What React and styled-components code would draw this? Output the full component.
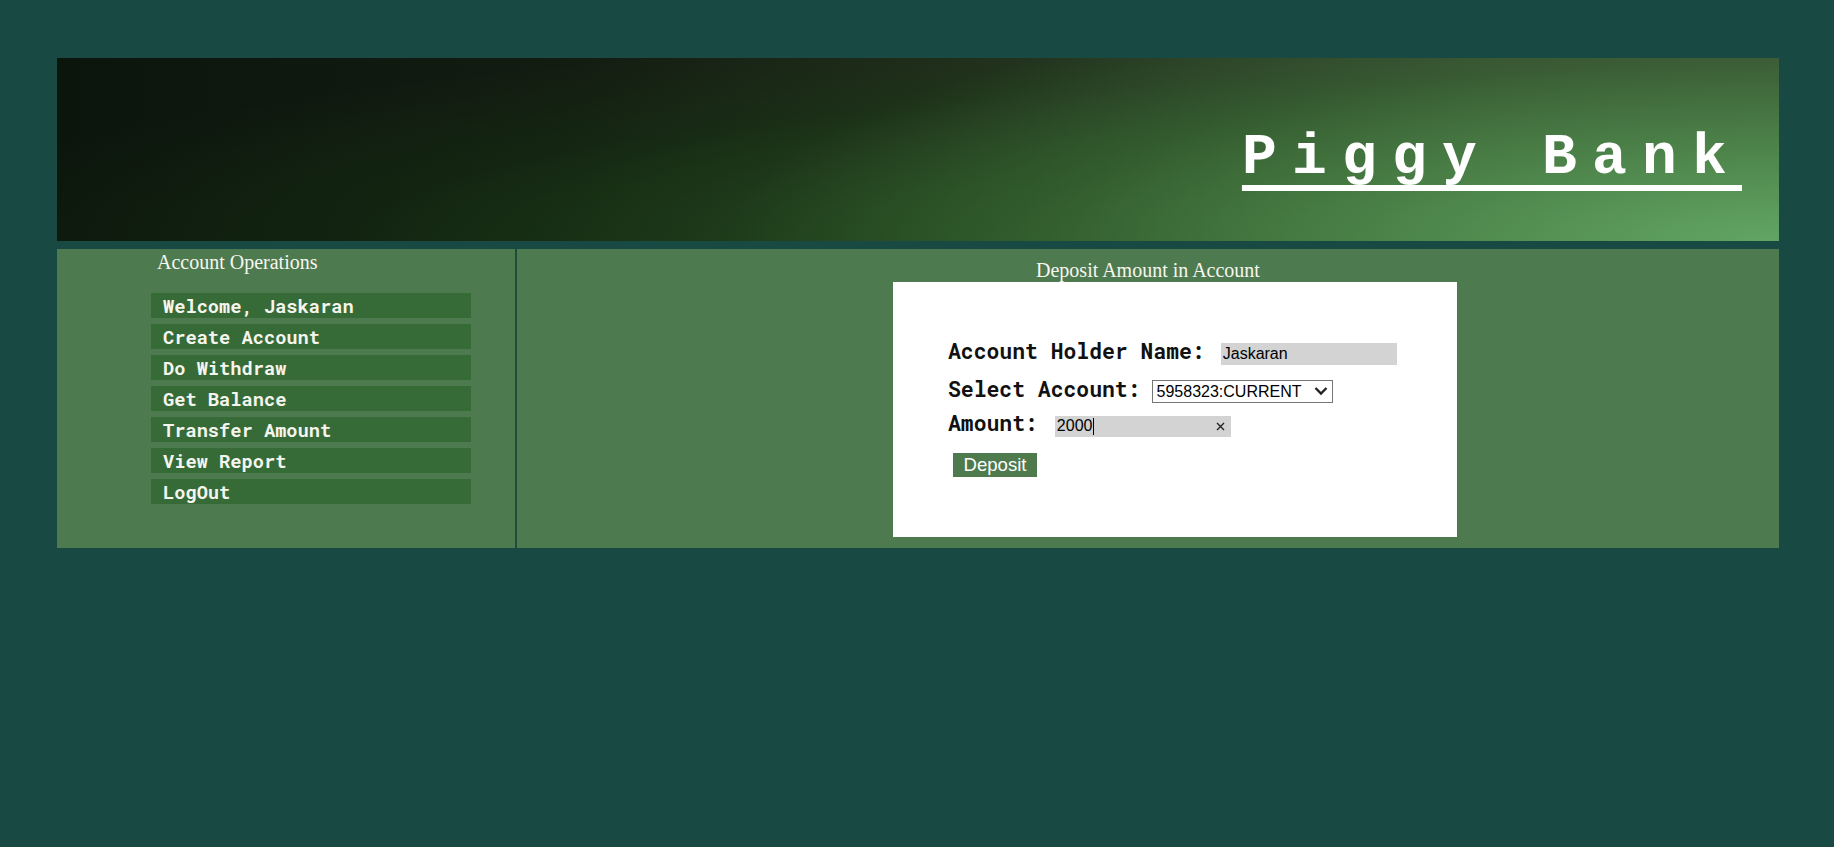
import React from "react";
import styled, { createGlobalStyle } from "styled-components";

const GlobalStyle = createGlobalStyle`
  html, body {
    margin: 0;
    padding: 0;
    background: #184a43;
  }
  body {
    font-family: "Liberation Serif", "Times New Roman", serif;
  }
  * { box-sizing: border-box; }
`;

const Page = styled.div`
  margin: 58px 55px 0 57px;
  display: flex;
  flex-direction: column;
  gap: 8px;
`;

const Header = styled.header`
  height: 183px;
  display: flex;
  justify-content: flex-end;
  align-items: flex-start;
  padding: 67.5px 37px 0 0;
  background:
    radial-gradient(ellipse 1050px 260px at 100% 100%,
      rgba(100, 168, 102, 0.95) 0%,
      rgba(88, 148, 86, 0.72) 35%,
      rgba(70, 120, 66, 0.38) 70%,
      rgba(60, 100, 55, 0) 100%),
    radial-gradient(ellipse 1900px 230px at 100% 100%,
      rgba(50, 115, 45, 0.75) 0%,
      rgba(40, 100, 35, 0.55) 40%,
      rgba(25, 70, 22, 0.25) 75%,
      rgba(15, 50, 15, 0) 100%),
    linear-gradient(to right, #0c150c 0%, #131c11 30%, #1f2a1a 50%, #2b3a26 66%, #3a4a33 84%, #3e4e38 100%);
`;

const Brand = styled.h1`
  margin: 0;
  font-family: "Liberation Mono", "Courier New", monospace;
  font-weight: 700;
  font-size: 58px;
  line-height: 64px;
  letter-spacing: 15.2px;
  color: #ffffff;
  text-decoration: underline;
  text-decoration-thickness: 6px;
  text-underline-offset: 12px;
  text-decoration-skip-ink: none;
  white-space: pre;
`;

const Body = styled.div`
  display: grid;
  grid-template-columns: 460px 1fr;
  background: #4e7a50;
`;

const Sidebar = styled.nav`
  border-right: 2px solid #1e4d3d;
  padding: 2px 0 0 94px;
`;

const PanelTitle = styled.div`
  font-family: "Liberation Serif", "Times New Roman", serif;
  font-size: 20px;
  line-height: 23px;
  color: #f7f7ef;
  padding-left: ${(p) => p.$indent || 0}px;
  text-align: ${(p) => (p.$center ? "center" : "left")};
`;

const Menu = styled.ul`
  list-style: none;
  margin: 19px 0 0 0;
  padding: 0;
  width: 320px;
  display: flex;
  flex-direction: column;
  gap: 6.5px;
`;

const MenuItem = styled.li`
  height: 24.5px;
  background: #366b38;
  padding: 1px 0 0 12px;
  font-family: "Roboto Mono", "DejaVu Sans Mono", monospace;
  font-weight: 700;
  font-size: 18.7px;
  line-height: 23.5px;
  color: #f5f5ee;
  white-space: pre;
  cursor: pointer;
`;

const Main = styled.main`
  padding: 10px 0 11px 0;
  display: flex;
  flex-direction: column;
`;

const FormCard = styled.form`
  margin-left: 376px;
  width: 564px;
  height: 255px;
  background: #ffffff;
  padding: 55px 0 0 55px;
`;

const Row = styled.div`
  display: flex;
  align-items: baseline;
  margin-top: ${(p) => p.$top || 0}px;
`;

const Label = styled.label`
  font-family: "Roboto Mono", "DejaVu Sans Mono", monospace;
  font-weight: 700;
  font-size: 21.4px;
  line-height: 28.2px;
  color: #111111;
  white-space: pre;
`;

const TextInput = styled.input`
  margin: 0 0 0 ${(p) => p.$gap}px;
  width: 176px;
  height: 22px;
  border: none;
  outline: none;
  background: #d3d3d3;
  padding: 0 2px;
  font-family: "Liberation Sans", Arial, sans-serif;
  font-size: 16px;
  color: #000;
`;

const SelectWrap = styled.span`
  position: relative;
  display: inline-block;
  margin-left: ${(p) => p.$gap}px;
`;

const Select = styled.select`
  appearance: none;
  -webkit-appearance: none;
  width: 181px;
  height: 23px;
  border: 1px solid #767676;
  border-radius: 0;
  background: #ffffff;
  padding: 0 0 0 4px;
  font-family: "Liberation Sans", Arial, sans-serif;
  font-size: 16px;
  color: #000;
`;

const Chevron = styled.svg`
  position: absolute;
  right: 5px;
  top: 6px;
  pointer-events: none;
`;

const SearchField = styled.div`
  margin-left: ${(p) => p.$gap}px;
  width: 176px;
  height: 20.4px;
  background: #d3d3d3;
  display: flex;
  align-items: center;
  padding: 0 6px 0 2px;
  font-family: "Liberation Sans", Arial, sans-serif;
  font-size: 16px;
  color: #000;
`;

const FieldValue = styled.span`
  line-height: 18px;
`;

const Caret = styled.span`
  display: inline-block;
  width: 1px;
  height: 17px;
  background: #000;
  margin-left: 1px;
`;

const ClearIcon = styled.svg`
  margin-left: auto;
`;

const SubmitButton = styled.button`
  margin: 15.5px 0 0 5px;
  width: 84px;
  height: 24px;
  border: none;
  border-radius: 0;
  background: #4e7a4e;
  color: #ffffff;
  font-family: "Liberation Sans", Arial, sans-serif;
  font-size: 18.6px;
  padding: 0;
  display: block;
`;

const menu = [
  "Welcome, Jaskaran",
  "Create Account",
  "Do Withdraw",
  "Get Balance",
  "Transfer Amount",
  "View Report",
  "LogOut",
];

export default function App() {
  return (
    <>
      <GlobalStyle />
      <Page>
        <Header>
          <Brand>Piggy Bank</Brand>
        </Header>
        <Body>
          <Sidebar>
            <PanelTitle $indent={6}>Account Operations</PanelTitle>
            <Menu>
              {menu.map((m) => (
                <MenuItem key={m}>{m}</MenuItem>
              ))}
            </Menu>
          </Sidebar>
          <Main>
            <PanelTitle $center>Deposit Amount in Account</PanelTitle>
            <FormCard onSubmit={(e) => e.preventDefault()}>
              <Row>
                <Label htmlFor="holder">Account Holder Name:</Label>
                <TextInput id="holder" $gap={16} defaultValue="Jaskaran" readOnly />
              </Row>
              <Row $top={10.2}>
                <Label htmlFor="acct">Select Account:</Label>
                <SelectWrap $gap={11}>
                  <Select id="acct" defaultValue="5958323">
                    <option value="5958323">5958323:CURRENT</option>
                  </Select>
                  <Chevron width="14" height="10" viewBox="0 0 14 10">
                    <path d="M1.5 2 L7 7.5 L12.5 2" fill="none" stroke="#222" strokeWidth="2.4" />
                  </Chevron>
                </SelectWrap>
              </Row>
              <Row $top={5.8}>
                <Label>Amount:</Label>
                <SearchField $gap={17}>
                  <FieldValue>2000</FieldValue>
                  <Caret />
                  <ClearIcon width="9" height="9" viewBox="0 0 9 9">
                    <path d="M1 1 L8 8 M8 1 L1 8" stroke="#222" strokeWidth="1.4" />
                  </ClearIcon>
                </SearchField>
              </Row>
              <SubmitButton type="submit">Deposit</SubmitButton>
            </FormCard>
          </Main>
        </Body>
      </Page>
    </>
  );
}
